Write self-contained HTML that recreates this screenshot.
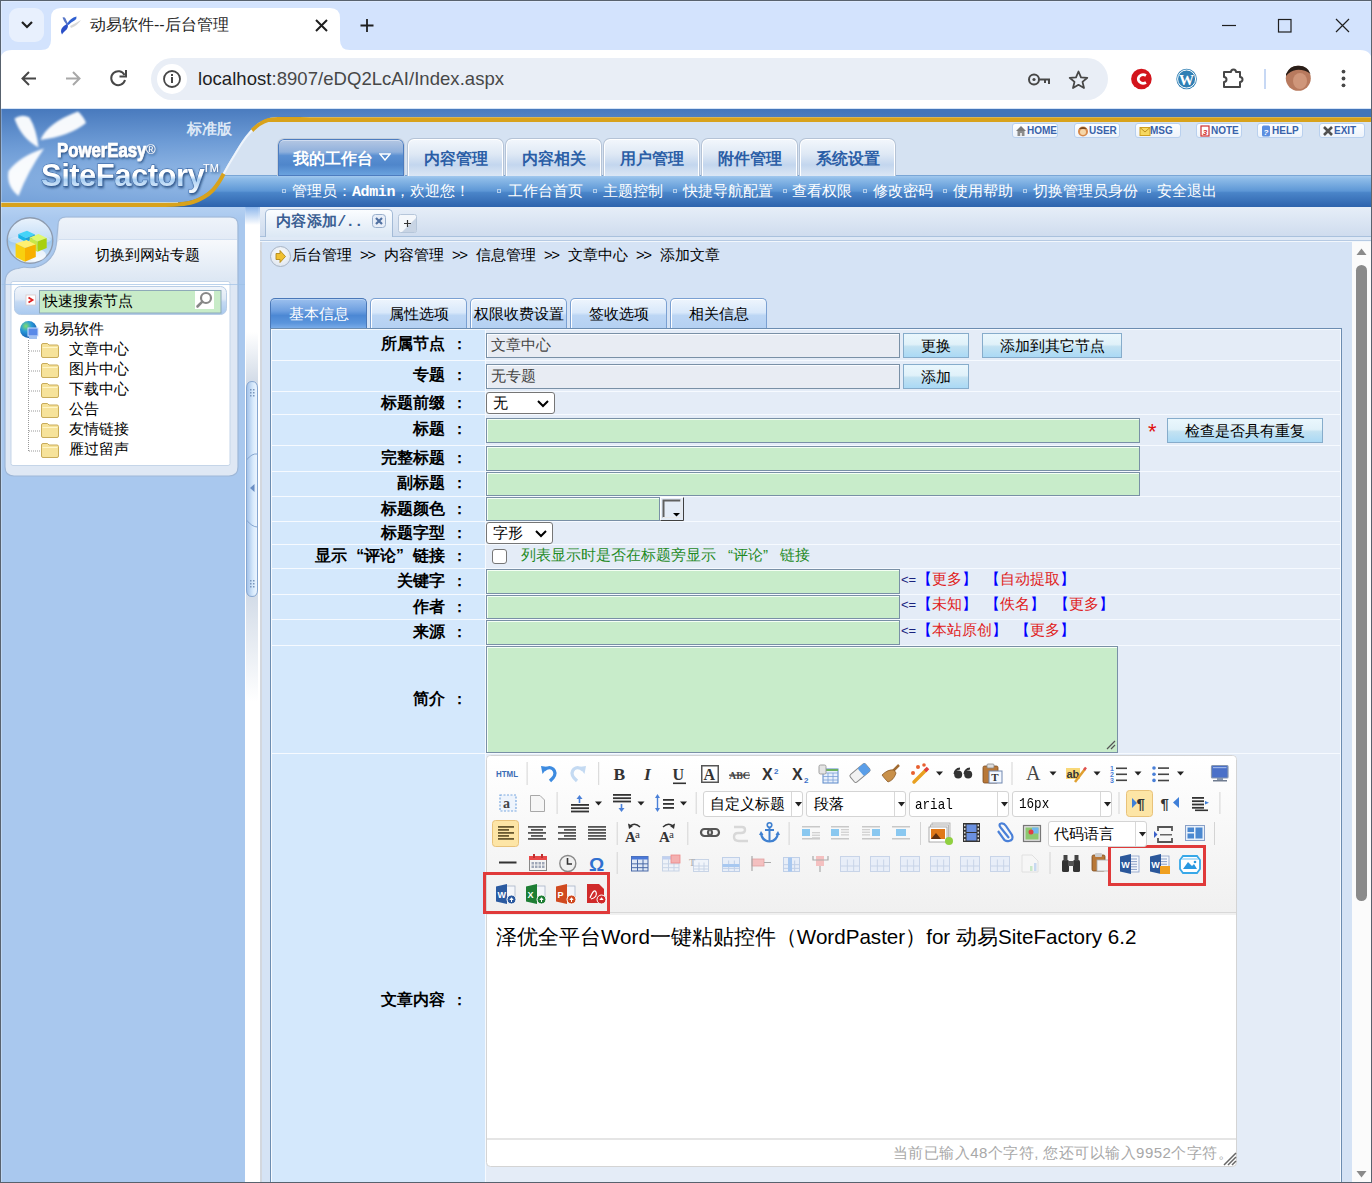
<!DOCTYPE html>
<html><head><meta charset="utf-8">
<style>
*{box-sizing:border-box}
html,body{margin:0;padding:0}
body{width:1372px;height:1183px;overflow:hidden;position:relative;background:#fff;font-family:"Liberation Sans",sans-serif;font-size:15px;color:#000}
.a{position:absolute}
.cj{font-family:"Liberation Sans",sans-serif}
/* chrome */
#tabbar{left:0;top:0;width:1372px;height:50px;background:#d3e3fd}
#toolbar{left:0;top:50px;width:1372px;height:59px;background:#fff}
#omni{left:151px;top:58px;width:956px;height:42px;border-radius:21px;background:#e9eef6}
/* header */
#hdr{left:0;top:109px;width:1372px;height:98px}
/* sidebar */
#side{left:1px;top:207px;width:244px;height:976px;background:#a9c8ee}
#split{left:245px;top:207px;width:15px;height:976px;background:#fff}
#content{left:260px;top:207px;width:1092px;height:976px;background:#d5e3f5}
#vscroll{left:1352px;top:242px;width:19px;height:941px;background:#fbfbfb}
.frame{left:0;top:0;width:1372px;height:1183px;border:1px solid #58626e;pointer-events:none;box-shadow:inset 1px 1px 0 rgba(255,255,255,0.25)}
</style></head><body>

<!-- ========== BROWSER CHROME ========== -->
<div id="tabbar" class="a"></div>
<div class="a" style="left:9px;top:8px;width:35px;height:34px;border-radius:9px;background:#e8f0fd"></div>
<svg class="a" style="left:0;top:0" width="1372" height="109">
 <path d="M22 22 L27 27 L32 22" fill="none" stroke="#1f1f1f" stroke-width="2.2"/>
 <!-- active tab -->
 <path d="M41 50 Q51 50 51 40 L51 18 Q51 8 61 8 L330 8 Q340 8 340 18 L340 40 Q340 50 350 50 Z" fill="#fff"/>
 <!-- favicon bird -->
 <defs><filter id="fb" x="-30%" y="-30%" width="160%" height="160%"><feGaussianBlur stdDeviation="0.45"/></filter></defs>
 <g filter="url(#fb)">
 <path d="M70 26 Q76 23 81 20 Q78 25 71 28 Z" fill="#c8c8c8" opacity="0.7"/>
 <path d="M62.5 17.5 Q64.5 16.5 65.5 18.5 Q66.5 21 68 23.5 L66.5 24.5 Q63.5 21 62.5 17.5 Z" fill="#5a78c8"/>
 <path d="M67 24 Q70 18 76.5 16.5 Q77 19 74.5 20.5 Q71 22 68.5 25 Z" fill="#2f5fd0"/>
 <path d="M67.5 23.5 Q69 28 65 31 Q62.5 33 62 34.5 Q60 31 62 28 Q64 25.5 67.5 23.5 Z" fill="#2a50c8"/>
 </g>
 <!-- tab close -->
 <path d="M316 20 L327 31 M327 20 L316 31" stroke="#1f1f1f" stroke-width="2"/>
 <!-- new tab + -->
 <path d="M367 19 V32 M360.5 25.5 H373.5" stroke="#1f1f1f" stroke-width="1.8"/>
 <!-- window controls -->
 <path d="M1222 25.5 H1236" stroke="#1f1f1f" stroke-width="1.2"/>
 <rect x="1278.5" y="19.5" width="12.5" height="12.5" fill="none" stroke="#1f1f1f" stroke-width="1.2"/>
 <path d="M1336 19 L1349 32 M1349 19 L1336 32" stroke="#1f1f1f" stroke-width="1.2"/>
 <!-- toolbar -->
 <rect x="0" y="50" width="1372" height="59" fill="#fff"/>
 <path d="M0 50 L0 62 Q0 50 12 50 Z" fill="#d3e3fd"/>
 <path d="M1372 50 L1372 62 Q1372 50 1360 50 Z" fill="#d3e3fd"/>
 <!-- back -->
 <path d="M36 78.5 H23 M29 72 L22.5 78.5 L29 85" fill="none" stroke="#474747" stroke-width="2"/>
 <!-- forward -->
 <path d="M66 78.5 H79 M73 72 L79.5 78.5 L73 85" fill="none" stroke="#a8a8a8" stroke-width="2"/>
 <!-- reload -->
 <path d="M124.5 75 A7 7 0 1 0 125 80" fill="none" stroke="#474747" stroke-width="2"/>
 <path d="M126 70 V76.5 H119.5" fill="none" stroke="#474747" stroke-width="2"/>
 <!-- omnibox -->
 <rect x="151" y="58" width="957" height="42" rx="21" fill="#e9eef6"/>
 <circle cx="172" cy="79" r="15" fill="#fff"/>
 <circle cx="172" cy="79" r="8" fill="none" stroke="#474747" stroke-width="1.8"/>
 <rect x="171" y="77" width="2" height="6" fill="#474747"/>
 <rect x="171" y="74" width="2" height="2" fill="#474747"/>
 <!-- key -->
 <circle cx="1034" cy="79.5" r="5" fill="none" stroke="#474747" stroke-width="2"/>
 <circle cx="1034" cy="79.5" r="1.6" fill="#474747"/>
 <path d="M1039 79.5 H1049 V84 M1045 79.5 V83" fill="none" stroke="#474747" stroke-width="2"/>
 <!-- star -->
 <path d="M1078.5 71.5 L1081 77.3 L1087.3 77.8 L1082.5 81.9 L1084 88 L1078.5 84.8 L1073 88 L1074.5 81.9 L1069.7 77.8 L1076 77.3 Z" fill="none" stroke="#474747" stroke-width="1.8" stroke-linejoin="round"/>
 <!-- red C -->
 <circle cx="1141.4" cy="79" r="10.3" fill="#d3141c"/>
 <path d="M1146 75.5 A5 4.2 0 1 0 1146 82.5" fill="none" stroke="#fff" stroke-width="2.8"/>
 <!-- WP -->
 <circle cx="1186.6" cy="79" r="10.3" fill="#2f7fb4"/>
 <circle cx="1186.6" cy="79" r="9" fill="none" stroke="#fff" stroke-width="1"/>
 <text x="1186.6" y="85" font-family="Liberation Serif" font-size="15" font-weight="bold" fill="#fff" text-anchor="middle">W</text>
 <!-- puzzle -->
 <path d="M1224 72 H1231 A2.5 2.5 0 0 1 1236 72 H1240 V77 A2.5 2.5 0 0 1 1240 82 V87 H1224 V82 A2.5 2.5 0 0 0 1224 77 Z" fill="none" stroke="#474747" stroke-width="2" stroke-linejoin="round"/>
 <rect x="1264" y="69" width="2" height="20" fill="#c7d8f4"/>
 <!-- avatar -->
 <circle cx="1298.3" cy="78.3" r="12.5" fill="#b87a5e"/>
 <path d="M1286 74 Q1290 65 1299 65.8 Q1308 66 1310.5 74 Q1304 69 1296 70 Q1290 71 1286 76 Z" fill="#2a1e18"/>
 <ellipse cx="1300" cy="81" rx="7" ry="8" fill="#cf967a"/>
 <!-- kebab -->
 <circle cx="1343.5" cy="71.6" r="1.9" fill="#474747"/>
 <circle cx="1343.5" cy="78.5" r="1.9" fill="#474747"/>
 <circle cx="1343.5" cy="85.3" r="1.9" fill="#474747"/>
 <rect x="0" y="108" width="1372" height="1" fill="#d6e4f6"/>
</svg>
<div class="a" style="left:90px;top:14px;font-size:16px;color:#1f1f1f;line-height:22px">动易软件--后台管理</div>
<div class="a" style="left:198px;top:67px;font-size:18.5px;color:#1f1f1f;line-height:24px;letter-spacing:0.05px">localhost<span style="color:#474747">:8907/eDQ2LcAI/Index.aspx</span></div>
<!-- ========== HEADER ========== -->
<svg class="a" style="left:0;top:109px" width="1372" height="98">
 <defs>
  <linearGradient id="navg" x1="0" y1="0" x2="0" y2="1">
   <stop offset="0" stop-color="#a9cdf0"/><stop offset="0.12" stop-color="#8dbbe8"/><stop offset="0.5" stop-color="#5d97d6"/><stop offset="0.55" stop-color="#4a85c9"/><stop offset="1" stop-color="#2d63ad"/>
  </linearGradient>
  <radialGradient id="logog" cx="0.25" cy="0.75" r="0.8">
   <stop offset="0" stop-color="#9cc0ea"/><stop offset="0.5" stop-color="#6e9cd6"/><stop offset="1" stop-color="#4375ba"/>
  </radialGradient>
  <linearGradient id="sfg" x1="0" y1="0" x2="0" y2="1">
   <stop offset="0" stop-color="#ffffff"/><stop offset="0.5" stop-color="#ffffff"/><stop offset="0.62" stop-color="#a9cff3"/><stop offset="1" stop-color="#ffffff"/>
  </linearGradient>
  <linearGradient id="petal" x1="0" y1="0" x2="1" y2="1">
   <stop offset="0" stop-color="#fff" stop-opacity="0.95"/><stop offset="1" stop-color="#fff" stop-opacity="0.35"/>
  </linearGradient>
  <filter id="blur1" x="-20%" y="-20%" width="140%" height="140%"><feGaussianBlur stdDeviation="0.9"/></filter>
  <filter id="shad" x="-10%" y="-10%" width="130%" height="140%"><feDropShadow dx="1" dy="1.5" stdDeviation="0.8" flood-color="#1d3f70" flood-opacity="0.8"/></filter>
 </defs>
 <rect x="0" y="0" width="1372" height="98" fill="#d5e2f2"/>
 <rect x="0" y="0" width="1372" height="8" fill="#4374b6"/><rect x="0" y="0" width="1372" height="1" fill="#5f80aa"/>
 <rect x="0" y="8" width="1372" height="1" fill="#e8eef6"/>
 <rect x="0" y="9" width="1372" height="4" fill="#d8a21c"/>
 <rect x="0" y="66" width="1372" height="32" fill="url(#navg)"/>
 <rect x="0" y="66" width="1372" height="1" fill="#7aa6d6"/>
 <!-- logo blue shape with S curve -->
 <path d="M1372 10 L310 10 C306.7 10.0 295.3 9.8 290.0 9.8 C284.7 9.8 281.7 9.7 278.0 9.9 C274.3 10.1 271.2 10.3 268.0 11.2 C264.8 12.1 261.7 13.8 259.0 15.5 C256.3 17.2 254.2 19.3 252.0 21.5 C249.8 23.7 247.9 26.0 246.0 28.5 C244.1 31.0 242.4 33.4 240.4 36.5 C238.4 39.6 236.1 43.6 234.0 47.0 C231.9 50.4 229.7 54.0 228.0 57.0 C226.3 60.0 225.2 62.1 223.7 64.8 C222.2 67.5 220.9 70.2 219.0 73.0 C217.1 75.8 215.0 79.0 212.5 81.5 C210.0 84.0 207.2 86.1 204.0 88.0 C200.8 89.9 197.0 91.8 193.0 93.0 C189.0 94.2 184.7 94.8 180.0 95.3 C175.3 95.8 170.0 95.9 165.0 96.0 C160.0 96.1 152.5 96.0 150.0 96.0 L0 96 V0 H1372 Z" fill="url(#logog)" transform="translate(0 -2)"/>
 <path d="M1372 10 L310 10 C306.7 10.0 295.3 9.8 290.0 9.8 C284.7 9.8 281.7 9.7 278.0 9.9 C274.3 10.1 271.2 10.3 268.0 11.2 C264.8 12.1 261.7 13.8 259.0 15.5 C256.3 17.2 253.2 20.5 252.0 21.5" fill="none" stroke="#d8a21c" stroke-width="3.6"/>
 <path d="M252 21.5 C251.0 22.7 247.9 26.0 246.0 28.5 C244.1 31.0 242.4 33.4 240.4 36.5 C238.4 39.6 236.1 43.6 234.0 47.0 C231.9 50.4 229.7 54.0 228.0 57.0 C226.3 60.0 225.2 62.1 223.7 64.8 C222.2 67.5 219.8 71.6 219.0 73.0" fill="none" stroke="#eef4fb" stroke-width="2"/>
 <path d="M223.7 64.8 C222.9 66.2 220.9 70.2 219.0 73.0 C217.1 75.8 215.0 79.0 212.5 81.5 C210.0 84.0 207.2 86.1 204.0 88.0 C200.8 89.9 197.0 91.8 193.0 93.0 C189.0 94.2 184.7 94.8 180.0 95.3 C175.3 95.8 170.0 95.9 165.0 96.0 C160.0 96.1 152.5 96.0 150.0 96.0 L0 96" fill="none" stroke="#d8a21c" stroke-width="4"/>
 <rect x="0" y="93" width="178" height="1" fill="#f3ecc8" opacity="0.7"/>
 <!-- petals -->
 <g filter="url(#blur1)" fill="#fff">
  <path d="M14.5 9.5 Q22 4.5 29.5 8.5 Q36.5 20 38.5 38.5 Q21 29 14.5 9.5 Z" opacity="0.95"/>
  <path d="M40.5 31 Q47 14 78 2.5 Q84 8 86 14 Q70 27 40.5 31 Z" opacity="0.95"/>
  <path d="M44 39.5 Q20 47 8.5 62 Q6 77 18.5 87 Q28 62 44 39.5 Z" opacity="0.95"/>
 </g>
 <g filter="url(#shad)">
  <text x="57" y="48.5" font-family="Liberation Sans" font-weight="bold" font-size="19.5" fill="#fff" stroke="#fff" stroke-width="0.7" transform="translate(57 0) scale(0.86 1) translate(-57 0)">PowerEasy</text>
  <text x="146" y="45" font-family="Liberation Sans" font-size="13" fill="#fff">®</text>
  <text x="41" y="77" font-family="Liberation Sans" font-weight="bold" font-size="31" fill="url(#sfg)" stroke="#2f5e9e" stroke-width="0.8" paint-order="stroke" letter-spacing="-0.5">SiteFactory</text>
  <text x="203" y="63" font-family="Liberation Sans" font-size="11" fill="#fff">TM</text>
 </g>
 <text x="187" y="25" font-size="15" fill="#dce8f6" style="font-family:'Liberation Sans',sans-serif;font-weight:bold">标准版</text>
</svg>
<!-- header overlay -->
<style>
.ntab{position:absolute;top:138px;height:38px;width:97px;border:1px solid #b5c3d6;border-bottom:none;border-radius:7px 7px 0 0;background:linear-gradient(#f3f7fc 0%,#dfe9f5 40%,#c3d6ee 70%,#dce7f4 100%);box-shadow:inset 0 1px 0 #fff,inset 1px 0 0 #fff,inset -1px 0 0 #fff;font-weight:bold;color:#2b5ea6;font-size:16px;text-align:center;line-height:40px}
.ntab.act{background:linear-gradient(#b7c9e4 0%,#8fb0dc 35%,#5b90d2 45%,#4f86cb 70%,#6da5e0 100%);color:#fff;border-color:#c4cfdc;box-shadow:inset 0 0 0 1px #4d7cbf,inset 0 2px 0 #cfdcf0}
.hbtn{position:absolute;top:123px;height:15px;width:46px;border:1px solid #b9d0ee;border-radius:3px;background:linear-gradient(#fdfeff,#edf3fb);font:bold 10px "Liberation Sans",sans-serif;color:#3862aa;line-height:13px;padding-left:14px;letter-spacing:0px}
.hbtn i{position:absolute;left:2px;top:1px;width:11px;height:11px}
.nl{position:absolute;top:181px;color:#fff;font-size:15px;line-height:20px;white-space:nowrap}
.nb{position:absolute;top:189px;width:4px;height:4px;border:1px solid #c8dcf2;opacity:0.8}
</style>
<div class="ntab act" style="left:277px;width:128px;text-align:left;padding-left:15px">我的工作台<svg style="position:absolute;left:101px;top:14px" width="12" height="8"><path d="M1 1 H11 L6 7 Z" fill="none" stroke="#fff" stroke-width="1.4"/></svg></div>
<div class="ntab" style="left:407px">内容管理</div>
<div class="ntab" style="left:505px">内容相关</div>
<div class="ntab" style="left:603px">用户管理</div>
<div class="ntab" style="left:701px">附件管理</div>
<div class="ntab" style="left:799px">系统设置</div>

<div class="hbtn" style="left:1012px"><i><svg width="12" height="12"><path d="M1 6 L6 1 L11 6 Z" fill="#7a7a7a"/><rect x="2.5" y="6" width="7" height="5" fill="#8c8c8c"/><rect x="5" y="8" width="2" height="3" fill="#ddd"/></svg></i>HOME</div>
<div class="hbtn" style="left:1074px"><i><svg width="12" height="12"><circle cx="6" cy="6.5" r="5" fill="#d8894a"/><circle cx="6" cy="7" r="3" fill="#f6d6a8"/><path d="M2 4 Q6 0 10 4" fill="#7a4a20"/></svg></i>USER</div>
<div class="hbtn" style="left:1135px"><i><svg width="13" height="12"><rect x="2" y="2.5" width="10" height="8" fill="#f6d860" stroke="#d0a020"/><path d="M2 2.5 L7 7 L12 2.5" fill="none" stroke="#c09020"/></svg></i>MSG</div>
<div class="hbtn" style="left:1196px"><i><svg width="12" height="12"><rect x="2" y="1" width="8" height="10" fill="#fff" stroke="#d03030" stroke-width="1.2"/><text x="6" y="9.5" font-size="8" fill="#d03030" text-anchor="middle" font-family="Liberation Sans" font-weight="bold">3</text></svg></i>NOTE</div>
<div class="hbtn" style="left:1257px"><i><svg width="12" height="12"><rect x="2" y="0.5" width="8" height="11" rx="1.5" fill="#5b8ee0"/><text x="6" y="9.5" font-size="8" fill="#fff" text-anchor="middle" font-family="Liberation Sans" font-weight="bold">?</text></svg></i>HELP</div>
<div class="hbtn" style="left:1319px"><i><svg width="12" height="12"><path d="M2 2 L10 10 M10 2 L2 10" stroke="#505050" stroke-width="2.6"/></svg></i>EXIT</div>

<div class="nb" style="left:282px"></div>
<div class="nl" style="left:292px">管理员：<b style="font-family:'Liberation Mono',monospace;letter-spacing:-0.4px">Admin</b>，欢迎您！</div>
<div class="nb" style="left:497px"></div><div class="nl" style="left:508px">工作台首页</div>
<div class="nb" style="left:593px"></div><div class="nl" style="left:603px">主题控制</div>
<div class="nb" style="left:673px"></div><div class="nl" style="left:683px">快捷导航配置</div>
<div class="nb" style="left:783px"></div><div class="nl" style="left:792px">查看权限</div>
<div class="nb" style="left:863px"></div><div class="nl" style="left:873px">修改密码</div>
<div class="nb" style="left:943px"></div><div class="nl" style="left:953px">使用帮助</div>
<div class="nb" style="left:1023px"></div><div class="nl" style="left:1033px">切换管理员身份</div>
<div class="nb" style="left:1147px"></div><div class="nl" style="left:1157px">安全退出</div>
<!-- ========== SIDEBAR ========== -->
<div id="side" class="a" style="background:linear-gradient(#b4d0f2 0px,#a9c8ee 12px,#a9c8ee 100%)"></div>
<svg class="a" style="left:0;top:207px" width="245" height="280">
 <defs>
  <linearGradient id="tabtop" x1="0" y1="0" x2="0" y2="1"><stop offset="0" stop-color="#eef3fa"/><stop offset="1" stop-color="#e3ebf6"/></linearGradient>
  <linearGradient id="tabbot" x1="0" y1="0" x2="0" y2="1"><stop offset="0" stop-color="#f7f9fc"/><stop offset="1" stop-color="#dbe6f3"/></linearGradient>
  <linearGradient id="srch" x1="0" y1="0" x2="0" y2="1"><stop offset="0" stop-color="#f2f6fb"/><stop offset="0.45" stop-color="#dfe9f6"/><stop offset="0.55" stop-color="#c5daf3"/><stop offset="1" stop-color="#a9c9ef"/></linearGradient>
  <linearGradient id="circ" x1="0" y1="0" x2="0" y2="1"><stop offset="0" stop-color="#eaf3fc"/><stop offset="0.42" stop-color="#c8e0f8"/><stop offset="0.5" stop-color="#9cc8f0"/><stop offset="0.8" stop-color="#c0dcf6"/><stop offset="1" stop-color="#f4f8fc"/></linearGradient>
 </defs>
 <!-- outer panel shape -->
 <path d="M58 18 Q58 10 66 10 H230 Q238 10 238 18 V260 Q238 269 229 269 H14 Q5 269 5 260 V76 Q5 63 18 61.5 L24 60 A26.5 26.5 0 0 0 56.4 36 Z" fill="#dfe8f4" stroke="#9fb8d8" stroke-width="1.2"/>
 <path d="M59 18 Q59 11 66 11 H230 Q237 11 237 18 V32 H59 Z" fill="url(#tabtop)"/>
 <rect x="59" y="32" width="178" height="1" fill="#d2dff0"/>
 <path d="M59 33 H237 V74 H6 V76 Q6 64 18 62.5 L24 61 A27.5 27.5 0 0 0 57.4 36 Z" fill="url(#tabbot)"/>
 <!-- circle badge -->
 <circle cx="30" cy="33.5" r="25.6" fill="#a9c8ee"/>
 <circle cx="30" cy="33.5" r="22.8" fill="url(#circ)" stroke="#8e9cb0" stroke-width="1.4"/>
 <ellipse cx="30" cy="33" rx="21" ry="4" fill="#ffffff" opacity="0.35"/>
 <ellipse cx="36" cy="48" rx="10" ry="6" fill="#ffffff" opacity="0.7"/>
 <!-- cubes -->
 <path d="M18.3 27 L27 23.7 L35 27.5 L26 31 Z" fill="#44d4f8"/>
 <path d="M18.3 27 L26 31 L26 35 L18.3 31 Z" fill="#18b4e8"/>
 <path d="M26 31 L35 27.5 L35 31 L26 35 Z" fill="#20a0d8"/>
 <path d="M29.7 30.5 L38.5 27 L46.7 31 L37.5 34.5 Z" fill="#e0f870"/>
 <path d="M29.7 30.5 L37.5 34.5 L37.5 44.7 L29.7 41 Z" fill="#c8e848"/>
 <path d="M37.5 34.5 L46.7 31 L46.7 41 L37.5 44.7 Z" fill="#a8d010"/>
 <path d="M15.6 36.5 L26.5 33 L35.8 37.5 L25 41 Z" fill="#fff070"/>
 <path d="M15.6 36.5 L25 41 L25 54.8 L15.6 50 Z" fill="#f8d010"/>
 <path d="M25 41 L35.8 37.5 L35.8 50 L25 54.8 Z" fill="#f8b000"/>
 <!-- inner white panel -->
 <rect x="11" y="74.5" width="219" height="184" rx="2" fill="#fff" stroke="#c5d5e8" stroke-width="1"/>
 <rect x="0" y="77" width="245" height="1" fill="#9ec0e6" opacity="0.7"/>
 <!-- search bar -->
 <rect x="14.5" y="79.5" width="212" height="28" rx="6" fill="url(#srch)" stroke="#b8cde6" stroke-width="1"/>
 <rect x="26" y="88" width="9.5" height="10" fill="#fff" stroke="#d8c8c8" stroke-width="0.8"/>
 <path d="M28.5 90.5 L32.5 93 L28.5 95.5" fill="none" stroke="#e02020" stroke-width="1.8"/>
 <rect x="39.5" y="83.5" width="181.5" height="22.5" fill="#c8ecc8" stroke="#8eaab8" stroke-width="1"/>
 <rect x="195" y="84" width="19" height="18" fill="#fff"/>
 <circle cx="206" cy="91" r="5" fill="none" stroke="#888" stroke-width="2.2"/>
 <path d="M202.3 94.7 L197.5 99.5" stroke="#888" stroke-width="2.6" stroke-linecap="round"/>
 <!-- tree lines -->
 <path d="M28.5 133 V244" stroke="#999" stroke-width="1" stroke-dasharray="1 1"/>
 <path d="M29 144 H41 M29 164 H41 M29 184 H41 M29 204 H41 M29 224 H41 M29 244 H41" stroke="#999" stroke-width="1" stroke-dasharray="1 1"/>
</svg>
<div class="a" style="left:95px;top:246px;font-size:15px;line-height:18px">切换到网站专题</div>
<div class="a" style="left:43px;top:292px;font-size:15px;line-height:18px">快速搜索节点</div>
<svg class="a" style="left:20px;top:321px" width="19" height="19"><defs><radialGradient id="glb" cx="0.35" cy="0.3" r="0.8"><stop offset="0" stop-color="#7fe070"/><stop offset="0.4" stop-color="#2a9ad8"/><stop offset="1" stop-color="#1050a8"/></radialGradient></defs><circle cx="8.5" cy="8.5" r="8.5" fill="url(#glb)"/><rect x="8" y="7" width="10" height="8" fill="#5a8ae8" stroke="#d0e0ff" stroke-width="1"/><rect x="9" y="15" width="8" height="3" fill="#a0c0f0"/></svg>
<div class="a" style="left:44px;top:320px;font-size:15px;line-height:18px">动易软件</div>
<svg class="a" style="left:41px;top:342px" width="18" height="16"><path d="M0.5 3 Q0.5 1.5 2 1.5 H6.5 L8 3 H16 Q17.5 3 17.5 4.5 V14 Q17.5 15.5 16 15.5 H2 Q0.5 15.5 0.5 14 Z" fill="#f6e29a" stroke="#c9ac5a" stroke-width="1"/><rect x="1.5" y="5" width="15" height="1" fill="#fff6c8"/></svg>
<div class="a" style="left:69px;top:340px;font-size:15px;line-height:18px">文章中心</div>
<svg class="a" style="left:41px;top:362px" width="18" height="16"><path d="M0.5 3 Q0.5 1.5 2 1.5 H6.5 L8 3 H16 Q17.5 3 17.5 4.5 V14 Q17.5 15.5 16 15.5 H2 Q0.5 15.5 0.5 14 Z" fill="#f6e29a" stroke="#c9ac5a" stroke-width="1"/><rect x="1.5" y="5" width="15" height="1" fill="#fff6c8"/></svg>
<div class="a" style="left:69px;top:360px;font-size:15px;line-height:18px">图片中心</div>
<svg class="a" style="left:41px;top:382px" width="18" height="16"><path d="M0.5 3 Q0.5 1.5 2 1.5 H6.5 L8 3 H16 Q17.5 3 17.5 4.5 V14 Q17.5 15.5 16 15.5 H2 Q0.5 15.5 0.5 14 Z" fill="#f6e29a" stroke="#c9ac5a" stroke-width="1"/><rect x="1.5" y="5" width="15" height="1" fill="#fff6c8"/></svg>
<div class="a" style="left:69px;top:380px;font-size:15px;line-height:18px">下载中心</div>
<svg class="a" style="left:41px;top:402px" width="18" height="16"><path d="M0.5 3 Q0.5 1.5 2 1.5 H6.5 L8 3 H16 Q17.5 3 17.5 4.5 V14 Q17.5 15.5 16 15.5 H2 Q0.5 15.5 0.5 14 Z" fill="#f6e29a" stroke="#c9ac5a" stroke-width="1"/><rect x="1.5" y="5" width="15" height="1" fill="#fff6c8"/></svg>
<div class="a" style="left:69px;top:400px;font-size:15px;line-height:18px">公告</div>
<svg class="a" style="left:41px;top:422px" width="18" height="16"><path d="M0.5 3 Q0.5 1.5 2 1.5 H6.5 L8 3 H16 Q17.5 3 17.5 4.5 V14 Q17.5 15.5 16 15.5 H2 Q0.5 15.5 0.5 14 Z" fill="#f6e29a" stroke="#c9ac5a" stroke-width="1"/><rect x="1.5" y="5" width="15" height="1" fill="#fff6c8"/></svg>
<div class="a" style="left:69px;top:420px;font-size:15px;line-height:18px">友情链接</div>
<svg class="a" style="left:41px;top:442px" width="18" height="16"><path d="M0.5 3 Q0.5 1.5 2 1.5 H6.5 L8 3 H16 Q17.5 3 17.5 4.5 V14 Q17.5 15.5 16 15.5 H2 Q0.5 15.5 0.5 14 Z" fill="#f6e29a" stroke="#c9ac5a" stroke-width="1"/><rect x="1.5" y="5" width="15" height="1" fill="#fff6c8"/></svg>
<div class="a" style="left:69px;top:440px;font-size:15px;line-height:18px">雁过留声</div>
<div id="split" class="a"></div><div id="splitin"></div>
<!-- ========== CONTENT ========== -->
<style>
#split{background:linear-gradient(#9cc0ee 0px,#ffffff 18px,#ffffff 100%)}
#splitin{position:absolute;left:246px;top:207px;width:12px;height:976px;background:linear-gradient(#8fb8ec 0px,#ffffff 18px,#ffffff 125px,#d3dce8 174px,#d3dce8 389px,#ffffff 495px,#ffffff 100%)}
</style>
<svg class="a" style="left:245px;top:370px" width="15" height="240">
 <defs><linearGradient id="hnd" x1="0" y1="0" x2="1" y2="0"><stop offset="0" stop-color="#9fbfe8"/><stop offset="0.6" stop-color="#d8eafc"/><stop offset="1" stop-color="#eef6ff"/></linearGradient></defs>
 <path d="M1.5 18 Q1.5 11.5 7 11.5 Q12.5 11.5 12.5 18 V220 Q12.5 226.5 7 226.5 Q1.5 226.5 1.5 220 Z" fill="url(#hnd)" stroke="#86a6d0" stroke-width="1"/>
 <path d="M1.5 90 Q7 83 12.5 84" fill="none" stroke="#86a6d0" stroke-width="1"/>
 <path d="M1.5 150 Q7 157 12.5 157" fill="none" stroke="#86a6d0" stroke-width="1"/>
 <path d="M9.5 114 L5 118 L9.5 122 Z" fill="#6a8ec4"/>
 <g fill="#7a96bc"><rect x="5" y="19" width="1.5" height="1.5"/><rect x="8" y="19" width="1.5" height="1.5"/><rect x="5" y="22" width="1.5" height="1.5"/><rect x="8" y="22" width="1.5" height="1.5"/><rect x="5" y="25" width="1.5" height="1.5"/><rect x="8" y="25" width="1.5" height="1.5"/>
 <rect x="5" y="210" width="1.5" height="1.5"/><rect x="8" y="210" width="1.5" height="1.5"/><rect x="5" y="213" width="1.5" height="1.5"/><rect x="8" y="213" width="1.5" height="1.5"/><rect x="5" y="216" width="1.5" height="1.5"/><rect x="8" y="216" width="1.5" height="1.5"/></g>
</svg>
<div id="content" class="a"></div>
<!-- tab strip -->
<div class="a" style="left:260px;top:207px;width:1111px;height:29px;background:linear-gradient(#e6eef8,#cfdcee)"></div>
<div class="a" style="left:260px;top:236px;width:1111px;height:1px;background:#a9c1dd"></div>
<div class="a" style="left:260px;top:237px;width:1111px;height:3px;background:#dfe9f6"></div>
<div class="a" style="left:260px;top:240px;width:1111px;height:1px;background:#b6cae3"></div>
<div class="a" style="left:260px;top:241px;width:1111px;height:1px;background:#f2f7fc"></div>
<div class="a" style="left:265px;top:209px;width:128px;height:28px;border:1px solid #a3bad6;border-bottom:none;border-radius:5px 5px 0 0;background:linear-gradient(#fbfdff,#dce8f5)"></div>
<div class="a" style="left:276px;top:212px;font-size:15px;line-height:18px;font-weight:bold;color:#3b5f93;letter-spacing:0.3px">内容添加<span style="font-family:'Liberation Mono',monospace;letter-spacing:-0.5px">/..</span></div>
<svg class="a" style="left:372px;top:214px" width="14" height="14"><rect x="0.5" y="0.5" width="13" height="13" rx="3" fill="#e8eef8" stroke="#9ab0cc"/><path d="M4 4 L10 10 M10 4 L4 10" stroke="#5070a0" stroke-width="2.2"/></svg>
<svg class="a" style="left:398px;top:214px" width="19" height="19"><rect x="0.5" y="0.5" width="18" height="18" rx="2" fill="#f4f7fb" stroke="#b6c6da"/><path d="M18 4 L18 18 L4 18 Z" fill="#c8d4e4"/><path d="M9.5 6 V13 M6 9.5 H13" stroke="#333" stroke-width="1.2"/></svg>
<div class="a" style="left:260px;top:242px;width:2px;height:941px;background:#d3d7de"></div>
<!-- breadcrumb -->
<svg class="a" style="left:270px;top:246px" width="22" height="22"><defs><radialGradient id="bci" cx="0.5" cy="0.4" r="0.6"><stop offset="0" stop-color="#fff"/><stop offset="1" stop-color="#dfe6ef"/></radialGradient></defs><circle cx="10.5" cy="10.5" r="10" fill="url(#bci)" stroke="#a8b4c4" stroke-width="1"/><path d="M6 7.5 H10 V4.5 L15.5 10.5 L10 16.5 V13.5 H6 Z" fill="#f0c030" stroke="#b08818" stroke-width="0.9"/></svg>
<div class="a" style="left:292px;top:246px;font-size:15px;line-height:18px">后台管理</div><div class="a" style="left:360px;top:246px;font-size:15px;line-height:18px;letter-spacing:-1.5px">&gt;&gt;</div><div class="a" style="left:384px;top:246px;font-size:15px;line-height:18px">内容管理</div><div class="a" style="left:452px;top:246px;font-size:15px;line-height:18px;letter-spacing:-1.5px">&gt;&gt;</div><div class="a" style="left:476px;top:246px;font-size:15px;line-height:18px">信息管理</div><div class="a" style="left:544px;top:246px;font-size:15px;line-height:18px;letter-spacing:-1.5px">&gt;&gt;</div><div class="a" style="left:568px;top:246px;font-size:15px;line-height:18px">文章中心</div><div class="a" style="left:636px;top:246px;font-size:15px;line-height:18px;letter-spacing:-1.5px">&gt;&gt;</div><div class="a" style="left:660px;top:246px;font-size:15px;line-height:18px">添加文章</div>
<!-- ========== FORM ========== -->
<style>
.stab{position:absolute;top:298px;width:97px;height:31px;border:1px solid #7aa0d2;border-bottom:none;border-radius:5px 5px 0 0;background:linear-gradient(#eef5fd 0%,#d8e8fa 45%,#bcd6f4 55%,#b4d0f2 100%);font-size:15px;text-align:center;line-height:29px;color:#000;box-shadow:inset 1px 1px 0 #fff}
.stab.act{background:linear-gradient(#9cc0ee 0%,#6d9fe0 40%,#4c88d4 55%,#5b95dc 80%,#7fb0ea 100%);color:#fff;border-color:#4a78b8;box-shadow:inset 0 1px 0 #b8d4f4}
.lab{position:absolute;left:272px;width:213px;background:#d4e8fc}
.val{position:absolute;left:486px;width:854px;background:#e4ecf7}
.lt{position:absolute;font-weight:bold;font-size:15.6px;line-height:18px;white-space:nowrap;text-align:right}
.colon{position:absolute;left:452px;font-weight:bold;font-size:15px;line-height:18px}
.inp{position:absolute;left:486px;border:1px solid #7990a6;background:#c8ecca;box-shadow:inset 1px 1px 0 #f4fff4}
.inpg{background:#e8ecf3;box-shadow:inset 1px 1px 0 #fafcff}
.btn{position:absolute;border:1px solid #86accb;background:linear-gradient(#eaf7fd 0%,#e0f1f9 45%,#c3e2f2 55%,#aad9f5 100%);font-size:15px;line-height:23px;text-align:center;color:#000}
.sel{position:absolute;left:486px;border:1px solid #767676;border-radius:3px;background:#fff;font-size:15px;line-height:20px;padding-left:6px}
.sel svg{position:absolute;right:4px;top:6px}
.q1{display:inline-block;width:17px;text-align:right}.q2{display:inline-block;width:17px;text-align:left}
.it{position:absolute;font-size:15px;line-height:18px;white-space:nowrap}
</style>
<div class="stab act" style="left:270px">基本信息</div>
<div class="stab" style="left:370px">属性选项</div>
<div class="stab" style="left:470px">权限收费设置</div>
<div class="stab" style="left:570px">签收选项</div>
<div class="stab" style="left:670px">相关信息</div>
<div class="a" style="left:270px;top:328px;width:1072px;height:855px;background:#f6faff;border:1px solid #6c8db1;border-bottom:none"></div>

<div class="lab" style="top:330px;height:30px"></div><div class="val" style="top:330px;height:30px"></div>
<div class="lt" style="right:927px;top:335px">所属节点</div><div class="colon" style="top:335px">：</div>
<div class="lab" style="top:361px;height:30px"></div><div class="val" style="top:361px;height:30px"></div>
<div class="lt" style="right:927px;top:366px">专题</div><div class="colon" style="top:366px">：</div>
<div class="lab" style="top:392px;height:22px"></div><div class="val" style="top:392px;height:22px"></div>
<div class="lt" style="right:927px;top:394px">标题前缀</div><div class="colon" style="top:394px">：</div>
<div class="lab" style="top:415px;height:30px"></div><div class="val" style="top:415px;height:30px"></div>
<div class="lt" style="right:927px;top:420px">标题</div><div class="colon" style="top:420px">：</div>
<div class="lab" style="top:446px;height:25px"></div><div class="val" style="top:446px;height:25px"></div>
<div class="lt" style="right:927px;top:449px">完整标题</div><div class="colon" style="top:449px">：</div>
<div class="lab" style="top:472px;height:24px"></div><div class="val" style="top:472px;height:24px"></div>
<div class="lt" style="right:927px;top:474px">副标题</div><div class="colon" style="top:474px">：</div>
<div class="lab" style="top:497px;height:24px"></div><div class="val" style="top:497px;height:24px"></div>
<div class="lt" style="right:927px;top:500px">标题颜色</div><div class="colon" style="top:500px">：</div>
<div class="lab" style="top:522px;height:22px"></div><div class="val" style="top:522px;height:22px"></div>
<div class="lt" style="right:927px;top:524px">标题字型</div><div class="colon" style="top:524px">：</div>
<div class="lab" style="top:545px;height:23px"></div><div class="val" style="top:545px;height:23px"></div>
<div class="lt" style="right:927px;top:547px">显示<span class="q1">“</span>评论<span class="q2">”</span>链接</div><div class="colon" style="top:547px">：</div>
<div class="lab" style="top:569px;height:25px"></div><div class="val" style="top:569px;height:25px"></div>
<div class="lt" style="right:927px;top:572px">关键字</div><div class="colon" style="top:572px">：</div>
<div class="lab" style="top:595px;height:24px"></div><div class="val" style="top:595px;height:24px"></div>
<div class="lt" style="right:927px;top:598px">作者</div><div class="colon" style="top:598px">：</div>
<div class="lab" style="top:620px;height:25px"></div><div class="val" style="top:620px;height:25px"></div>
<div class="lt" style="right:927px;top:623px">来源</div><div class="colon" style="top:623px">：</div>
<div class="lab" style="top:646px;height:107px"></div><div class="val" style="top:646px;height:107px"></div>
<div class="lt" style="right:927px;top:690px">简介</div><div class="colon" style="top:690px">：</div>
<div class="lab" style="top:754px;height:429px"></div><div class="val" style="top:754px;height:429px"></div>
<div class="lt" style="right:927px;top:991px">文章内容</div><div class="colon" style="top:991px">：</div>

<!-- inputs -->
<div class="inp inpg" style="top:333px;width:414px;height:25px"></div><div class="it" style="left:491px;top:336px;color:#444">文章中心</div>
<div class="btn" style="left:903px;top:333px;width:66px;height:25px">更换</div>
<div class="btn" style="left:982px;top:333px;width:140px;height:25px">添加到其它节点</div>
<div class="inp inpg" style="top:364px;width:414px;height:25px"></div><div class="it" style="left:491px;top:367px;color:#444">无专题</div>
<div class="btn" style="left:903px;top:364px;width:66px;height:25px">添加</div>
<div class="sel" style="top:392px;width:69px;height:22px">无<svg width="14" height="10"><path d="M2 2 L7 7 L12 2" fill="none" stroke="#000" stroke-width="2"/></svg></div>
<div class="inp" style="top:418px;width:654px;height:25px"></div>
<div class="it" style="left:1148px;top:421px;color:#e01010;font-size:22px;line-height:22px">*</div>
<div class="btn" style="left:1167px;top:418px;width:156px;height:25px">检查是否具有重复</div>
<div class="inp" style="top:446px;width:654px;height:25px"></div>
<div class="inp" style="top:472px;width:654px;height:24px"></div>
<div class="inp" style="top:497px;width:174px;height:24px"></div>
<svg class="a" style="left:660px;top:497px" width="24" height="24"><rect x="0" y="0" width="24" height="24" fill="#e4ecf7"/><path d="M0.5 23.5 V0.5 H23.5" fill="none" stroke="#fff" stroke-width="1"/><path d="M0.5 23.5 H23.5 V0.5" fill="none" stroke="#404040" stroke-width="1"/><path d="M3.5 20.5 V3.5 H20.5" fill="none" stroke="#606060" stroke-width="2"/><path d="M3 20.5 H21 V3" fill="none" stroke="#e8e8e8" stroke-width="1"/><path d="M13 16 H20 L16.5 19.5 Z" fill="#000"/></svg>
<div class="sel" style="top:522px;width:67px;height:22px">字形<svg width="14" height="10"><path d="M2 2 L7 7 L12 2" fill="none" stroke="#000" stroke-width="2"/></svg></div>
<div class="a" style="left:491.5px;top:548.5px;width:15px;height:15px;border:1.5px solid #767676;border-radius:3px;background:#fff"></div>
<div class="it" style="left:521px;top:546px;color:#1f8a1f">列表显示时是否在标题旁显示<span class="q1">“</span>评论<span class="q2">”</span>链接</div>
<div class="inp" style="top:569px;width:414px;height:25px"></div>
<div class="inp" style="top:595px;width:414px;height:24px"></div>
<div class="inp" style="top:620px;width:414px;height:25px"></div>
<div class="it" style="left:901px;top:570px;word-spacing:4px"><span style="color:#1a237e;font-size:13px;margin-right:1px">&lt;=</span><span style="color:#0000ff">【</span><span style="color:#e02020">更多</span><span style="color:#0000ff">】</span> <span style="color:#0000ff">【</span><span style="color:#e02020">自动提取</span><span style="color:#0000ff">】</span></div>
<div class="it" style="left:901px;top:595px;word-spacing:4px"><span style="color:#1a237e;font-size:13px;margin-right:1px">&lt;=</span><span style="color:#0000ff">【</span><span style="color:#e02020">未知</span><span style="color:#0000ff">】</span> <span style="color:#0000ff">【</span><span style="color:#e02020">佚名</span><span style="color:#0000ff">】</span> <span style="color:#0000ff">【</span><span style="color:#e02020">更多</span><span style="color:#0000ff">】</span></div>
<div class="it" style="left:901px;top:621px;word-spacing:4px"><span style="color:#1a237e;font-size:13px;margin-right:1px">&lt;=</span><span style="color:#0000ff">【</span><span style="color:#e02020">本站原创</span><span style="color:#0000ff">】</span> <span style="color:#0000ff">【</span><span style="color:#e02020">更多</span><span style="color:#0000ff">】</span></div>
<div class="inp" style="top:646px;width:632px;height:107px"></div>
<svg class="a" style="left:1104px;top:738px" width="12" height="12"><path d="M11 3 L3 11 M11 7 L7 11" stroke="#555" stroke-width="1.2"/></svg>

<!-- ========== EDITOR ========== -->
<svg class="a" style="left:486px;top:755px;overflow:visible" width="752" height="413"><defs><linearGradient id="tbg" x1="0" y1="0" x2="0" y2="1"><stop offset="0" stop-color="#ffffff"/><stop offset="1" stop-color="#f0f0f0"/></linearGradient><linearGradient id="wordg" x1="0" y1="0" x2="1" y2="0"><stop offset="0" stop-color="#2b579a"/><stop offset="1" stop-color="#3c6cc0"/></linearGradient></defs>
<rect x="0.5" y="0.5" width="750" height="411" rx="4" fill="#fff" stroke="#d4d4d4"/>
<path d="M1 5 Q1 1 5 1 H746 Q750 1 750 5 V157 H1 Z" fill="url(#tbg)"/>
<rect x="1" y="157" width="749" height="1" fill="#d8d8d8"/>
<rect x="1" y="158" width="749" height="2" fill="#ececec" opacity="0.8"/>
<rect x="1" y="383.5" width="749" height="1" fill="#cccccc"/>
<text x="10" y="21.5" font-family="Liberation Sans" font-weight="bold" font-size="9.5" fill="#3a6cb4" textLength="22" lengthAdjust="spacingAndGlyphs">HTML</text>
<rect x="40.6" y="7" width="1" height="23" fill="#d4d4d4"/>
<path d="M58 15 Q63 11 67 14 Q71 18 67 23 L64 26" fill="none" stroke="#3d8be0" stroke-width="3.2"/>
<path d="M55 11 L62 12 L56.5 19 Z" fill="#3d8be0"/>
<path d="M97 15 Q92 11 88 14 Q84 18 88 23 L91 26" fill="none" stroke="#c4daf2" stroke-width="3.2"/>
<path d="M100 11 L93 12 L98.5 19 Z" fill="#c4daf2"/>
<rect x="112.2" y="7" width="1" height="23" fill="#d4d4d4"/>
<text x="127.5" y="25" font-family="Liberation Serif" font-weight="bold" font-size="17.5" fill="#333">B</text>
<text x="158" y="25" font-family="Liberation Serif" font-weight="bold" font-style="italic" font-size="17.5" fill="#333">I</text>
<text x="186.5" y="25" font-family="Liberation Serif" font-weight="bold" font-size="16" fill="#333">U</text>
<rect x="187.0" y="27.5" width="13" height="1.6" fill="#333"/>
<rect x="215.75" y="10.75" width="16.5" height="16.5" fill="none" stroke="#555" stroke-width="1.5"/>
<text x="217.5" y="25" font-family="Liberation Serif" font-weight="bold" font-size="16" fill="#333">A</text>
<text x="243" y="24" font-family="Liberation Serif" font-weight="bold" font-size="10.5" fill="#444" textLength="21" lengthAdjust="spacingAndGlyphs">ABC</text>
<rect x="243" y="19.5" width="21" height="1.3" fill="#444"/>
<text x="276" y="25" font-family="Liberation Sans" font-weight="bold" font-size="16" fill="#333">X</text>
<text x="288" y="19" font-family="Liberation Sans" font-weight="bold" font-size="8" fill="#3a70c8">2</text>
<text x="306" y="25" font-family="Liberation Sans" font-weight="bold" font-size="16" fill="#333">X</text>
<text x="318" y="28" font-family="Liberation Sans" font-weight="bold" font-size="8" fill="#3a70c8">2</text>
<rect x="337" y="14" width="15" height="14" fill="#e8f0fb" stroke="#5a88c8" stroke-width="1"/>
<path d="M337 18 H352 M337 21.5 H352 M337 25 H352 M342 18 V28 M347 18 V28" stroke="#7aa0d8" stroke-width="0.8"/>
<rect x="337" y="14" width="15" height="2" fill="#6cb060"/>
<rect x="333" y="10" width="7" height="9" rx="1.5" fill="#e4e4e4" stroke="#999" stroke-width="0.9"/>
<g transform="translate(374 18) rotate(-40)"><rect x="-10" y="-5" width="20" height="10" rx="2" fill="#f2f2f2" stroke="#888" stroke-width="1"/><rect x="1" y="-5" width="9" height="10" rx="1.5" fill="#5a9ee8"/></g>
<path d="M407 16 L413 10" stroke="#a06a30" stroke-width="2.5"/>
<path d="M396 20 Q402 14 408 15 L410 18 Q408 25 402 27 Q398 23 396 20 Z" fill="#c8904a" stroke="#8a5a28" stroke-width="0.8"/>
<path d="M428 27 L440 15" stroke="#e8a020" stroke-width="3.5" stroke-linecap="round"/>
<path d="M439 16 L442 13" stroke="#e04040" stroke-width="3.5"/>
<circle cx="432" cy="12" r="2" fill="#e86030"/><circle cx="438" cy="10" r="1.8" fill="#e86030"/><circle cx="427" cy="18" r="2" fill="#e86030"/>
<path d="M450 16.5 H457 L453.5 20.5 Z" fill="#222"/>
<circle cx="472.2" cy="19.5" r="4" fill="#333"/><path d="M468.5 19 Q469 14 474 13.5" fill="none" stroke="#333" stroke-width="2"/>
<circle cx="482.2" cy="19.5" r="4" fill="#333"/><path d="M478.5 19 Q479 14 484 13.5" fill="none" stroke="#333" stroke-width="2"/>
<rect x="497" y="11" width="15" height="17" rx="1.5" fill="#b87838" stroke="#7a4a20" stroke-width="0.8"/>
<rect x="501" y="9" width="7" height="4" rx="1" fill="#ddd" stroke="#888" stroke-width="0.8"/>
<rect x="503" y="16" width="13" height="12" fill="#f4f8ff" stroke="#7088b0" stroke-width="1"/>
<text x="505.3" y="26" font-family="Liberation Serif" font-weight="bold" font-size="11" fill="#333">T</text>
<rect x="525.5" y="7" width="1" height="23" fill="#d4d4d4"/>
<text x="540" y="25" font-family="Liberation Serif" font-size="20" fill="#444">A</text>
<path d="M563.5 16.5 H570.5 L567.0 20.5 Z" fill="#222"/>
<rect x="580" y="13" width="14" height="11" fill="#f8d878"/>
<text x="580.5" y="22.5" font-family="Liberation Sans" font-weight="bold" font-size="11" fill="#333">ab</text>
<path d="M589 27 L599 14" stroke="#e0a030" stroke-width="2.5"/><path d="M598 15 L600 12.5" stroke="#e05050" stroke-width="2.5"/>
<path d="M607.5 16.5 H614.5 L611.0 20.5 Z" fill="#222"/>
<text x="624" y="16" font-family="Liberation Sans" font-weight="bold" font-size="7" fill="#4a80d8">1</text>
<rect x="630" y="12.5" width="11" height="1.6" fill="#444"/>
<text x="624" y="22" font-family="Liberation Sans" font-weight="bold" font-size="7" fill="#4a80d8">2</text>
<rect x="630" y="18.5" width="11" height="1.6" fill="#444"/>
<text x="624" y="28" font-family="Liberation Sans" font-weight="bold" font-size="7" fill="#4a80d8">3</text>
<rect x="630" y="24.5" width="11" height="1.6" fill="#444"/>
<path d="M648.5 16.5 H655.5 L652.0 20.5 Z" fill="#222"/>
<circle cx="668" cy="13.0" r="1.8" fill="#4a80d8"/>
<rect x="672" y="12.3" width="11" height="1.6" fill="#444"/>
<circle cx="668" cy="19.2" r="1.8" fill="#4a80d8"/>
<rect x="672" y="18.5" width="11" height="1.6" fill="#444"/>
<circle cx="668" cy="25.4" r="1.8" fill="#4a80d8"/>
<rect x="672" y="24.700000000000003" width="11" height="1.6" fill="#444"/>
<path d="M691 16.5 H698 L694.5 20.5 Z" fill="#222"/>
<rect x="725.5" y="10.5" width="16.5" height="12.5" rx="1" fill="#4a70c8" stroke="#8898b0" stroke-width="1.2"/>
<rect x="727" y="12" width="13.5" height="1.2" fill="#9ab4e8"/>
<rect x="731" y="23" width="6" height="2" fill="#8898b0"/><rect x="727" y="25" width="14" height="1.5" fill="#707c90"/>
<rect x="14" y="40" width="16" height="16" fill="#eef4fc" stroke="#7aa8e0" stroke-width="1.2" stroke-dasharray="2 1.5"/>
<text x="17" y="52.5" font-family="Liberation Serif" font-weight="bold" font-size="14" fill="#444">a</text>
<path d="M44.5 40.5 H54 L58.5 45 V56.5 H44.5 Z" fill="#f6f6f6" stroke="#a8a8a8" stroke-width="1"/>
<rect x="70.6" y="37" width="1" height="22" fill="#d4d4d4"/>
<path d="M93.5 48 V42" stroke="#4a80d8" stroke-width="1.6"/><path d="M90.5 44 L93.5 40 L96.5 44 Z" fill="#4a80d8"/>
<rect x="85" y="49.0" width="18" height="1.8" fill="#333"/>
<rect x="85" y="52.3" width="18" height="1.8" fill="#333"/>
<rect x="85" y="55.6" width="18" height="1.8" fill="#333"/>
<path d="M109 46.5 H116 L112.5 50.5 Z" fill="#222"/>
<rect x="127" y="39.0" width="18" height="1.8" fill="#333"/>
<rect x="127" y="42.3" width="18" height="1.8" fill="#333"/>
<rect x="127" y="45.6" width="18" height="1.8" fill="#333"/>
<path d="M135.5 49 V55" stroke="#4a80d8" stroke-width="1.6"/><path d="M132.5 53 L135.5 57 L138.5 53 Z" fill="#4a80d8"/>
<path d="M151.5 46.5 H158.5 L155.0 50.5 Z" fill="#222"/>
<path d="M171.5 42 V54" stroke="#4a80d8" stroke-width="1.4"/><path d="M169 43 L171.5 39 L174 43 Z M169 53 L171.5 57 L174 53 Z" fill="#4a80d8"/>
<rect x="177" y="44" width="11" height="1.8" fill="#333"/>
<rect x="177" y="48" width="11" height="1.8" fill="#333"/>
<rect x="177" y="52" width="11" height="1.8" fill="#333"/>
<path d="M194 46.5 H201 L197.5 50.5 Z" fill="#222"/>
<rect x="209.7" y="37" width="1" height="22" fill="#d4d4d4"/>
<rect x="632.5" y="37" width="1" height="22" fill="#d4d4d4"/>
<rect x="640.5" y="35.5" width="26" height="26" rx="3" fill="#fde5a6" stroke="#e8c27a" stroke-width="1"/>
<path d="M646 43 L651 48 L646 53 Z" fill="#3f7fd8"/>
<text x="650.5" y="54" font-family="Liberation Sans" font-weight="bold" font-size="15" fill="#333">¶</text>
<text x="674.5" y="54" font-family="Liberation Sans" font-weight="bold" font-size="15" fill="#333">¶</text>
<path d="M693 42 L687 47.5 L693 53 Z" fill="#3f7fd8"/>
<rect x="706" y="42.0" width="12" height="1.8" fill="#333"/>
<rect x="706" y="45.3" width="12" height="1.8" fill="#333"/>
<rect x="706" y="48.6" width="12" height="1.8" fill="#333"/>
<rect x="706" y="51.9" width="12" height="1.8" fill="#333"/>
<rect x="709" y="54.5" width="13" height="1.6" fill="#333"/>
<path d="M719 46 L723 47.8 L719 49.6 Z" fill="#3f7fd8"/>
<rect x="733.4" y="37" width="1" height="22" fill="#d4d4d4"/>
<rect x="6.5" y="65.5" width="26" height="26" rx="3" fill="#fde5a6" stroke="#e8c27a" stroke-width="1"/>
<rect x="12" y="71" width="16" height="1.8" fill="#6a5a30"/>
<rect x="12" y="74" width="11" height="1.8" fill="#6a5a30"/>
<rect x="12" y="77" width="16" height="1.8" fill="#6a5a30"/>
<rect x="12" y="80" width="11" height="1.8" fill="#6a5a30"/>
<rect x="12" y="83" width="16" height="1.8" fill="#6a5a30"/>
<rect x="42.0" y="71" width="18" height="1.8" fill="#555"/>
<rect x="45.0" y="74" width="12" height="1.8" fill="#555"/>
<rect x="42.0" y="77" width="18" height="1.8" fill="#555"/>
<rect x="45.0" y="80" width="12" height="1.8" fill="#555"/>
<rect x="42.0" y="83" width="18" height="1.8" fill="#555"/>
<rect x="72" y="71" width="18" height="1.8" fill="#555"/>
<rect x="78" y="74" width="12" height="1.8" fill="#555"/>
<rect x="72" y="77" width="18" height="1.8" fill="#555"/>
<rect x="78" y="80" width="12" height="1.8" fill="#555"/>
<rect x="72" y="83" width="18" height="1.8" fill="#555"/>
<rect x="102" y="71" width="18" height="1.8" fill="#555"/>
<rect x="102" y="74" width="18" height="1.8" fill="#555"/>
<rect x="102" y="77" width="18" height="1.8" fill="#555"/>
<rect x="102" y="80" width="18" height="1.8" fill="#555"/>
<rect x="102" y="83" width="18" height="1.8" fill="#555"/>
<rect x="130.7" y="67" width="1" height="23" fill="#d4d4d4"/>
<text x="139" y="87" font-family="Liberation Serif" font-weight="bold" font-size="15" fill="#333">A</text>
<text x="149" y="83" font-family="Liberation Serif" font-size="11" fill="#333">a</text>
<path d="M154 72 Q149 67 144 71" fill="none" stroke="#333" stroke-width="1.4"/><path d="M142 68.5 L143 74 L147 71 Z" fill="#333"/>
<text x="173" y="87" font-family="Liberation Serif" font-weight="bold" font-size="15" fill="#333">A</text>
<text x="183" y="83" font-family="Liberation Serif" font-size="11" fill="#333">a</text>
<path d="M177 72 Q182 67 187 71" fill="none" stroke="#333" stroke-width="1.4"/><path d="M189 68.5 L188 74 L184 71 Z" fill="#333"/>
<rect x="201.3" y="67" width="1" height="23" fill="#d4d4d4"/>
<rect x="215" y="74" width="11" height="7" rx="3.5" fill="none" stroke="#555" stroke-width="2.2"/><rect x="222" y="74" width="11" height="7" rx="3.5" fill="none" stroke="#555" stroke-width="2.2"/>
<path d="M248 72 H256 Q259 72 259 75 Q259 78 255 78 H252 Q248 78 248 82 Q248 86 253 86 H262" fill="none" stroke="#d8d8d8" stroke-width="2.4"/>
<circle cx="283.5" cy="70" r="2.3" fill="none" stroke="#3f80d0" stroke-width="1.6"/><path d="M283.5 72 V86 M279 75 H288" stroke="#3f80d0" stroke-width="2"/><path d="M275 78 Q276 86 283.5 86.5 Q291 86 292 78" fill="none" stroke="#3f80d0" stroke-width="2.2"/><path d="M273 80 L275 76 L277.5 80 Z M294 80 L292 76 L289.5 80 Z" fill="#3f80d0"/>
<rect x="302.6" y="67" width="1" height="23" fill="#d4d4d4"/>
<rect x="316" y="71" width="18" height="1.5" fill="#c8c8c8"/><rect x="316" y="83" width="18" height="1.5" fill="#c8c8c8"/>
<rect x="316" y="74" width="8" height="7" fill="#8ac8f0"/>
<rect x="326" y="77.0" width="8" height="1.3" fill="#d0d0d0"/>
<rect x="326" y="79.6" width="8" height="1.3" fill="#d0d0d0"/>
<rect x="326" y="82.2" width="8" height="1.3" fill="#d0d0d0"/>
<rect x="345" y="71" width="18" height="1.5" fill="#c8c8c8"/><rect x="345" y="83" width="18" height="1.5" fill="#c8c8c8"/>
<rect x="345" y="74" width="8" height="7" fill="#8ac8f0"/>
<rect x="355" y="74.0" width="8" height="1.3" fill="#d0d0d0"/>
<rect x="355" y="76.6" width="8" height="1.3" fill="#d0d0d0"/>
<rect x="355" y="79.2" width="8" height="1.3" fill="#d0d0d0"/>
<rect x="376" y="71" width="18" height="1.5" fill="#c8c8c8"/><rect x="376" y="83" width="18" height="1.5" fill="#c8c8c8"/>
<rect x="386" y="74" width="8" height="7" fill="#8ac8f0"/>
<rect x="376" y="74.0" width="8" height="1.3" fill="#d0d0d0"/>
<rect x="376" y="76.6" width="8" height="1.3" fill="#d0d0d0"/>
<rect x="376" y="79.2" width="8" height="1.3" fill="#d0d0d0"/>
<rect x="406" y="71" width="18" height="1.5" fill="#c8c8c8"/><rect x="406" y="83" width="18" height="1.5" fill="#c8c8c8"/>
<rect x="410" y="74" width="10" height="7" fill="#8ac8f0"/>
<rect x="434.0" y="67" width="1" height="23" fill="#d4d4d4"/>
<rect x="446" y="68" width="18" height="15" fill="#f0f0f0" stroke="#aaa" stroke-width="0.8"/><rect x="444.5" y="70" width="18" height="15" fill="#f4f4f4" stroke="#aaa" stroke-width="0.8"/>
<rect x="443" y="72" width="18" height="15" fill="#fff" stroke="#999" stroke-width="0.8"/><rect x="445" y="74" width="14" height="10" fill="#e07818"/><path d="M445 84 L450 78 L455 84 Z" fill="#603010"/>
<circle cx="463" cy="86" r="4" fill="#90d040"/>
<rect x="477" y="68" width="17" height="19" fill="#333"/><rect x="480.5" y="69.5" width="10" height="7.5" fill="#6a90e0"/><rect x="480.5" y="78" width="10" height="7.5" fill="#6a90e0"/>
<rect x="478" y="69.5" width="1.5" height="1.8" fill="#ddd"/><rect x="491.5" y="69.5" width="1.5" height="1.8" fill="#ddd"/>
<rect x="478" y="73.1" width="1.5" height="1.8" fill="#ddd"/><rect x="491.5" y="73.1" width="1.5" height="1.8" fill="#ddd"/>
<rect x="478" y="76.7" width="1.5" height="1.8" fill="#ddd"/><rect x="491.5" y="76.7" width="1.5" height="1.8" fill="#ddd"/>
<rect x="478" y="80.3" width="1.5" height="1.8" fill="#ddd"/><rect x="491.5" y="80.3" width="1.5" height="1.8" fill="#ddd"/>
<rect x="478" y="83.9" width="1.5" height="1.8" fill="#ddd"/><rect x="491.5" y="83.9" width="1.5" height="1.8" fill="#ddd"/>
<path d="M523 83 L515 73 Q512 69 515 68.5 Q518 68 520 71 L526 80 Q528 85 523 86 Q519 87 517 83 L512 76" fill="none" stroke="#4a80d8" stroke-width="2.2"/>
<rect x="537.5" y="70.5" width="17" height="16" fill="#ddd" stroke="#777" stroke-width="1.2"/><rect x="539.5" y="72.5" width="13" height="12" fill="#8cc870"/><rect x="546" y="72.5" width="6.5" height="6" fill="#70b8f0"/><circle cx="545" cy="77" r="2.5" fill="#e04040"/>
<path d="M672 76 V72 H686 V76 M672 83 V87 H686 V83" fill="none" stroke="#555" stroke-width="1.8"/><rect x="674" y="79" width="12" height="1.5" fill="#666"/><path d="M668 76 L671.5 79.5 L668 83 Z" fill="#3a60c8"/>
<rect x="699.5" y="70.5" width="19" height="15" fill="#e8f0fa" stroke="#88a0c8" stroke-width="1"/><rect x="701.5" y="72.5" width="6.5" height="4.5" fill="#4a88d0"/><rect x="701.5" y="78.5" width="6.5" height="5" fill="#4a88d0"/><rect x="709.5" y="72.5" width="7" height="11" fill="#4a88d0"/>
<rect x="728.0" y="67" width="1" height="23" fill="#d4d4d4"/>
<rect x="13" y="106.5" width="17.5" height="2" fill="#333"/>
<rect x="43.5" y="102.5" width="17" height="13" fill="#f4f4f4" stroke="#888" stroke-width="1"/><rect x="43" y="101" width="18" height="4" fill="#e84848"/><rect x="47" y="99" width="2" height="4" fill="#c03030"/><rect x="55" y="99" width="2" height="4" fill="#c03030"/>
<rect x="45.5" y="107.0" width="2.5" height="2.5" fill="#a0a8b8"/>
<rect x="49.0" y="107.0" width="2.5" height="2.5" fill="#a0a8b8"/>
<rect x="52.5" y="107.0" width="2.5" height="2.5" fill="#a0a8b8"/>
<rect x="56.0" y="107.0" width="2.5" height="2.5" fill="#a0a8b8"/>
<rect x="45.5" y="110.5" width="2.5" height="2.5" fill="#a0a8b8"/>
<rect x="49.0" y="110.5" width="2.5" height="2.5" fill="#a0a8b8"/>
<rect x="52.5" y="110.5" width="2.5" height="2.5" fill="#a0a8b8"/>
<rect x="56.0" y="110.5" width="2.5" height="2.5" fill="#a0a8b8"/>
<circle cx="81.8" cy="108.5" r="8" fill="#f0f0f0" stroke="#888" stroke-width="1.4"/><path d="M81.5 103 V109 H86" fill="none" stroke="#333" stroke-width="1.6"/>
<text x="103" y="116" font-family="Liberation Sans" font-weight="bold" font-size="19" fill="#3070d0">Ω</text>
<rect x="130.7" y="97" width="1" height="22" fill="#d4d4d4"/>
<rect x="145.5" y="101.5" width="16.5" height="14.5" fill="#dfe8f6" stroke="#4a6aa8" stroke-width="1"/>
<rect x="145.5" y="101.5" width="16.5" height="3" fill="#4a78d8"/>
<rect x="151.0" y="104.5" width="1" height="11.5" fill="#4a6aa8"/>
<rect x="156.5" y="104.5" width="1" height="11.5" fill="#4a6aa8"/>
<rect x="145.5" y="108.33333333333333" width="16.5" height="1" fill="#4a6aa8"/>
<rect x="145.5" y="112.16666666666667" width="16.5" height="1" fill="#4a6aa8"/>
<rect x="176.5" y="101.5" width="16.5" height="14.5" fill="#eef2f8" stroke="#c8d4e6" stroke-width="1"/>
<rect x="176.5" y="101.5" width="16.5" height="3" fill="#c0d0f0"/>
<rect x="182.0" y="104.5" width="1" height="11.5" fill="#c8d4e6"/>
<rect x="187.5" y="104.5" width="1" height="11.5" fill="#c8d4e6"/>
<rect x="176.5" y="108.33333333333333" width="16.5" height="1" fill="#c8d4e6"/>
<rect x="176.5" y="112.16666666666667" width="16.5" height="1" fill="#c8d4e6"/>
<rect x="185" y="100" width="9" height="8" fill="#f4b0b0" stroke="#e88" stroke-width="0.8"/>
<rect x="207.5" y="104.5" width="15" height="12" fill="#f0f4fa" stroke="#c8d4e6" stroke-width="1"/>
<rect x="212.5" y="107.5" width="1" height="9" fill="#c8d4e6"/>
<rect x="217.5" y="107.5" width="1" height="9" fill="#c8d4e6"/>
<rect x="207.5" y="110.5" width="15" height="1" fill="#c8d4e6"/>
<rect x="207.5" y="113.5" width="15" height="1" fill="#c8d4e6"/>
<text x="203" y="111" font-family="Liberation Serif" font-size="10" fill="#aaa">T</text>
<rect x="236.5" y="102.5" width="17" height="14" fill="#e8eef8" stroke="#c0d0e8" stroke-width="1"/>
<rect x="242.16666666666666" y="105.5" width="1" height="11" fill="#c0d0e8"/>
<rect x="247.83333333333334" y="105.5" width="1" height="11" fill="#c0d0e8"/>
<rect x="236.5" y="109.16666666666667" width="17" height="1" fill="#c0d0e8"/>
<rect x="236.5" y="112.83333333333333" width="17" height="1" fill="#c0d0e8"/>
<rect x="236.5" y="109" width="17" height="3" fill="#a8c8f0"/>
<rect x="266" y="104" width="12" height="7" fill="#f4c0c0" stroke="#e0a0a0" stroke-width="0.8"/><path d="M266 101 V116 M278 107.5 H285" stroke="#aaa" stroke-width="1.2"/>
<rect x="297.5" y="102.5" width="16" height="14" fill="#e8eef8" stroke="#c0d0e8" stroke-width="1"/>
<rect x="302.8333333333333" y="105.5" width="1" height="11" fill="#c0d0e8"/>
<rect x="308.1666666666667" y="105.5" width="1" height="11" fill="#c0d0e8"/>
<rect x="297.5" y="109.16666666666667" width="16" height="1" fill="#c0d0e8"/>
<rect x="297.5" y="112.83333333333333" width="16" height="1" fill="#c0d0e8"/>
<rect x="302" y="102.5" width="4" height="14" fill="#a8c8f0"/>
<rect x="330" y="101" width="8" height="10" fill="#f4c0c0"/><path d="M327 101 V105 H342 V101 M334 111 V117" fill="none" stroke="#aaa" stroke-width="1.2"/>
<rect x="354.5" y="101.5" width="19" height="15" fill="#e8eef8" stroke="#c8d4e8" stroke-width="1"/>
<rect x="360.8333333333333" y="104.5" width="1" height="12" fill="#c8d4e8"/>
<rect x="367.1666666666667" y="104.5" width="1" height="12" fill="#c8d4e8"/>
<rect x="354.5" y="110.5" width="19" height="1" fill="#c8d4e8"/>
<rect x="384.5" y="101.5" width="19" height="15" fill="#e8eef8" stroke="#c8d4e8" stroke-width="1"/>
<rect x="390.8333333333333" y="104.5" width="1" height="12" fill="#c8d4e8"/>
<rect x="397.1666666666667" y="104.5" width="1" height="12" fill="#c8d4e8"/>
<rect x="384.5" y="110.5" width="19" height="1" fill="#c8d4e8"/>
<rect x="414.5" y="101.5" width="19" height="15" fill="#e8eef8" stroke="#c8d4e8" stroke-width="1"/>
<rect x="420.8333333333333" y="104.5" width="1" height="12" fill="#c8d4e8"/>
<rect x="427.1666666666667" y="104.5" width="1" height="12" fill="#c8d4e8"/>
<rect x="414.5" y="110.5" width="19" height="1" fill="#c8d4e8"/>
<rect x="444.5" y="101.5" width="19" height="15" fill="#e8eef8" stroke="#c8d4e8" stroke-width="1"/>
<rect x="450.8333333333333" y="104.5" width="1" height="12" fill="#c8d4e8"/>
<rect x="457.1666666666667" y="104.5" width="1" height="12" fill="#c8d4e8"/>
<rect x="444.5" y="110.5" width="19" height="1" fill="#c8d4e8"/>
<rect x="474.5" y="101.5" width="19" height="15" fill="#e8eef8" stroke="#c8d4e8" stroke-width="1"/>
<rect x="480.8333333333333" y="104.5" width="1" height="12" fill="#c8d4e8"/>
<rect x="487.1666666666667" y="104.5" width="1" height="12" fill="#c8d4e8"/>
<rect x="474.5" y="110.5" width="19" height="1" fill="#c8d4e8"/>
<rect x="504.5" y="101.5" width="19" height="15" fill="#e8eef8" stroke="#c8d4e8" stroke-width="1"/>
<rect x="510.8333333333333" y="104.5" width="1" height="12" fill="#c8d4e8"/>
<rect x="517.1666666666666" y="104.5" width="1" height="12" fill="#c8d4e8"/>
<rect x="504.5" y="110.5" width="19" height="1" fill="#c8d4e8"/>
<path d="M536 100 H546 L552 106 V117 H536 Z" fill="#f6f6f6" stroke="#e0e0e0" stroke-width="1"/><rect x="544" y="111" width="2.5" height="5" fill="#c8e8c8"/><rect x="548" y="108" width="2.5" height="8" fill="#c8d8f0"/>
<rect x="563.5" y="97" width="1" height="22" fill="#d4d4d4"/>
<rect x="576" y="105" width="7" height="12" rx="1.5" fill="#333"/><rect x="587" y="105" width="7" height="12" rx="1.5" fill="#333"/><rect x="577.5" y="100" width="4" height="6" fill="#444"/><rect x="588.5" y="100" width="4" height="6" fill="#444"/><rect x="582" y="106" width="6" height="5" fill="#555"/>
<rect x="606" y="100" width="13" height="16" rx="1.5" fill="#b87838" stroke="#7a4a20" stroke-width="0.8"/><rect x="609" y="98" width="7" height="4" rx="1" fill="#ccc"/><rect x="611" y="105" width="12" height="11" fill="#f2f2f2" stroke="#aaa" stroke-width="0.8"/>
<rect x="623.5" y="91.5" width="95" height="38" fill="none" stroke="#e03a3a" stroke-width="3"/>
<rect x="642" y="101" width="11" height="16" fill="#f4f6fa" stroke="#8aa0c8" stroke-width="0.8"/>
<rect x="644" y="103.5" width="7" height="1" fill="#8aa0c8"/>
<rect x="644" y="106.1" width="7" height="1" fill="#8aa0c8"/>
<rect x="644" y="108.7" width="7" height="1" fill="#8aa0c8"/>
<rect x="644" y="111.3" width="7" height="1" fill="#8aa0c8"/>
<rect x="644" y="113.9" width="7" height="1" fill="#8aa0c8"/>
<path d="M634 101.5 L645 99 V119 L634 116.5 Z" fill="#2b579a"/>
<text x="635.2" y="112.5" font-family="Liberation Sans" font-weight="bold" font-size="9" fill="#fff">W</text>
<rect x="672" y="101" width="11" height="16" fill="#f4f6fa" stroke="#8aa0c8" stroke-width="0.8"/>
<rect x="674" y="103.5" width="7" height="1" fill="#8aa0c8"/>
<rect x="674" y="106.1" width="7" height="1" fill="#8aa0c8"/>
<rect x="674" y="108.7" width="7" height="1" fill="#8aa0c8"/>
<rect x="674" y="111.3" width="7" height="1" fill="#8aa0c8"/>
<rect x="674" y="113.9" width="7" height="1" fill="#8aa0c8"/>
<path d="M664 101.5 L675 99 V119 L664 116.5 Z" fill="#2b579a"/>
<text x="665.2" y="112.5" font-family="Liberation Sans" font-weight="bold" font-size="9" fill="#fff">W</text>
<rect x="674" y="111" width="10" height="8" fill="#f0a020"/>
<path d="M697 101 H711 L714 105 V114 L711 118 H697 L694 114 V105 Z" fill="#fff" stroke="#38a8e8" stroke-width="1.8"/><path d="M697 114 L702 107 L706 111 L708 109 L711 114 Z" fill="#2a98e0"/><rect x="696" y="103" width="16" height="2" fill="#b8e0f8"/><circle cx="709" cy="107" r="1.3" fill="#2a98e0"/>
<rect x="-1.5" y="118.5" width="124" height="39" fill="none" stroke="#e03a3a" stroke-width="3"/>
<rect x="18" y="131" width="11" height="15" fill="#f4f6fa" stroke="#a8b4c8" stroke-width="0.8"/>
<path d="M10 131.5 L21 129 V149 L10 146.5 Z" fill="#2b5aa0"/>
<text x="11.5" y="142.5" font-family="Liberation Sans" font-weight="bold" font-size="9" fill="#fff">W</text>
<circle cx="25.5" cy="144.5" r="4.5" fill="#2b5aa0" stroke="#fff" stroke-width="1"/><path d="M23.3 145 L25.5 142.3 L27.7 145 Z M25 145 H26 V147 H25 Z" fill="#fff"/>
<rect x="48" y="131" width="11" height="15" fill="#f4f6fa" stroke="#a8b4c8" stroke-width="0.8"/>
<path d="M40 131.5 L51 129 V149 L40 146.5 Z" fill="#1e7e34"/>
<text x="41.5" y="142.5" font-family="Liberation Sans" font-weight="bold" font-size="9" fill="#fff">X</text>
<circle cx="55.5" cy="144.5" r="4.5" fill="#1e7e34" stroke="#fff" stroke-width="1"/><path d="M53.3 145 L55.5 142.3 L57.7 145 Z M55 145 H56 V147 H55 Z" fill="#fff"/>
<rect x="78" y="131" width="11" height="15" fill="#f4f6fa" stroke="#a8b4c8" stroke-width="0.8"/>
<path d="M70 131.5 L81 129 V149 L70 146.5 Z" fill="#d04a20"/>
<text x="71.5" y="142.5" font-family="Liberation Sans" font-weight="bold" font-size="9" fill="#fff">P</text>
<circle cx="85.5" cy="144.5" r="4.5" fill="#d04a20" stroke="#fff" stroke-width="1"/><path d="M83.3 145 L85.5 142.3 L87.7 145 Z M85 145 H86 V147 H85 Z" fill="#fff"/>
<path d="M101 129 H113 L118 134 V148 H101 Z" fill="#d02a2a"/><path d="M104 143 Q108 133 110 137 Q112 142 105 144" fill="none" stroke="#fff" stroke-width="1.2"/>
<circle cx="115.5" cy="144.5" r="4.5" fill="#d02a2a" stroke="#fff" stroke-width="1"/><path d="M113.3 145 L115.5 142.3 L117.7 145 Z" fill="#fff"/></svg>
<div class="a" style="left:702.5px;top:790.5px;width:100.0px;height:26.0px;border:1px solid #d4d4d4;border-radius:3px;background:#fff;font-size:15px;line-height:24.0px;padding-left:6px;white-space:nowrap;overflow:hidden">自定义标题</div><div class="a" style="left:790.5px;top:791.5px;width:1px;height:24.0px;background:#d8d8d8"></div><svg class="a" style="left:794.5px;top:801.5px" width="8" height="5"><path d="M0 0 H7 L3.5 4.5 Z" fill="#222"/></svg>
<div class="a" style="left:805.5px;top:790.5px;width:100.0px;height:26.0px;border:1px solid #d4d4d4;border-radius:3px;background:#fff;font-size:15px;line-height:24.0px;padding-left:7px;white-space:nowrap;overflow:hidden">段落</div><div class="a" style="left:893.5px;top:791.5px;width:1px;height:24.0px;background:#d8d8d8"></div><svg class="a" style="left:897.5px;top:801.5px" width="8" height="5"><path d="M0 0 H7 L3.5 4.5 Z" fill="#222"/></svg>
<div class="a" style="left:909px;top:790.5px;width:99.5px;height:26.0px;border:1px solid #d4d4d4;border-radius:3px;background:#fff;font-family:'Liberation Mono',monospace;font-size:15px;line-height:24.0px;padding-left:5px;white-space:nowrap;overflow:hidden"><span style="display:inline-block;transform:scaleX(0.84);transform-origin:left;position:relative;top:2px">arial</span></div><div class="a" style="left:996.5px;top:791.5px;width:1px;height:24.0px;background:#d8d8d8"></div><svg class="a" style="left:1000.5px;top:801.5px" width="8" height="5"><path d="M0 0 H7 L3.5 4.5 Z" fill="#222"/></svg>
<div class="a" style="left:1011.5px;top:790.5px;width:100.5px;height:26.0px;border:1px solid #d4d4d4;border-radius:3px;background:#fff;font-family:'Liberation Mono',monospace;font-size:15px;line-height:24.0px;padding-left:6px;white-space:nowrap;overflow:hidden"><span style="display:inline-block;transform:scaleX(0.84);transform-origin:left;position:relative;top:1px">16px</span></div><div class="a" style="left:1099.5px;top:791.5px;width:1px;height:24.0px;background:#d8d8d8"></div><svg class="a" style="left:1103.5px;top:801.5px" width="8" height="5"><path d="M0 0 H7 L3.5 4.5 Z" fill="#222"/></svg>
<div class="a" style="left:1047.5px;top:820.5px;width:99.0px;height:26.0px;border:1px solid #d4d4d4;border-radius:3px;background:#fff;font-size:15px;line-height:24.0px;padding-left:5px;white-space:nowrap;overflow:hidden">代码语言</div><div class="a" style="left:1134.5px;top:821.5px;width:1px;height:24.0px;background:#d8d8d8"></div><svg class="a" style="left:1138.5px;top:831.5px" width="8" height="5"><path d="M0 0 H7 L3.5 4.5 Z" fill="#222"/></svg>
<div class="a" style="left:496px;top:923px;font-size:20.6px;line-height:27px;white-space:nowrap;color:#000">泽优全平台Word一键粘贴控件（WordPaster）for 动易SiteFactory 6.2</div>
<div class="a" style="left:893px;top:1143px;font-size:15px;letter-spacing:0.45px;line-height:19px;white-space:nowrap;color:#a8a8a8">当前已输入48个字符, 您还可以输入9952个字符。</div>
<svg class="a" style="left:1222px;top:1151px" width="15" height="15"><path d="M14 2 L2 14 M14 6 L6 14 M14 10 L10 14" stroke="#666" stroke-width="1.5"/></svg>
<!-- ========== /EDITOR ========== -->
<div id="vscroll" class="a"></div>
<svg class="a" style="left:1352px;top:242px" width="19" height="941">
 <path d="M4.5 13 L9.5 6.5 L14.5 13 Z" fill="#8a8a8a"/>
 <rect x="4" y="23" width="11" height="636" rx="5.5" fill="#8a8a8a"/>
 <path d="M4.5 929 L9.5 935.5 L14.5 929 Z" fill="#8a8a8a"/>
</svg>
<div class="a frame"></div>
</body></html>
